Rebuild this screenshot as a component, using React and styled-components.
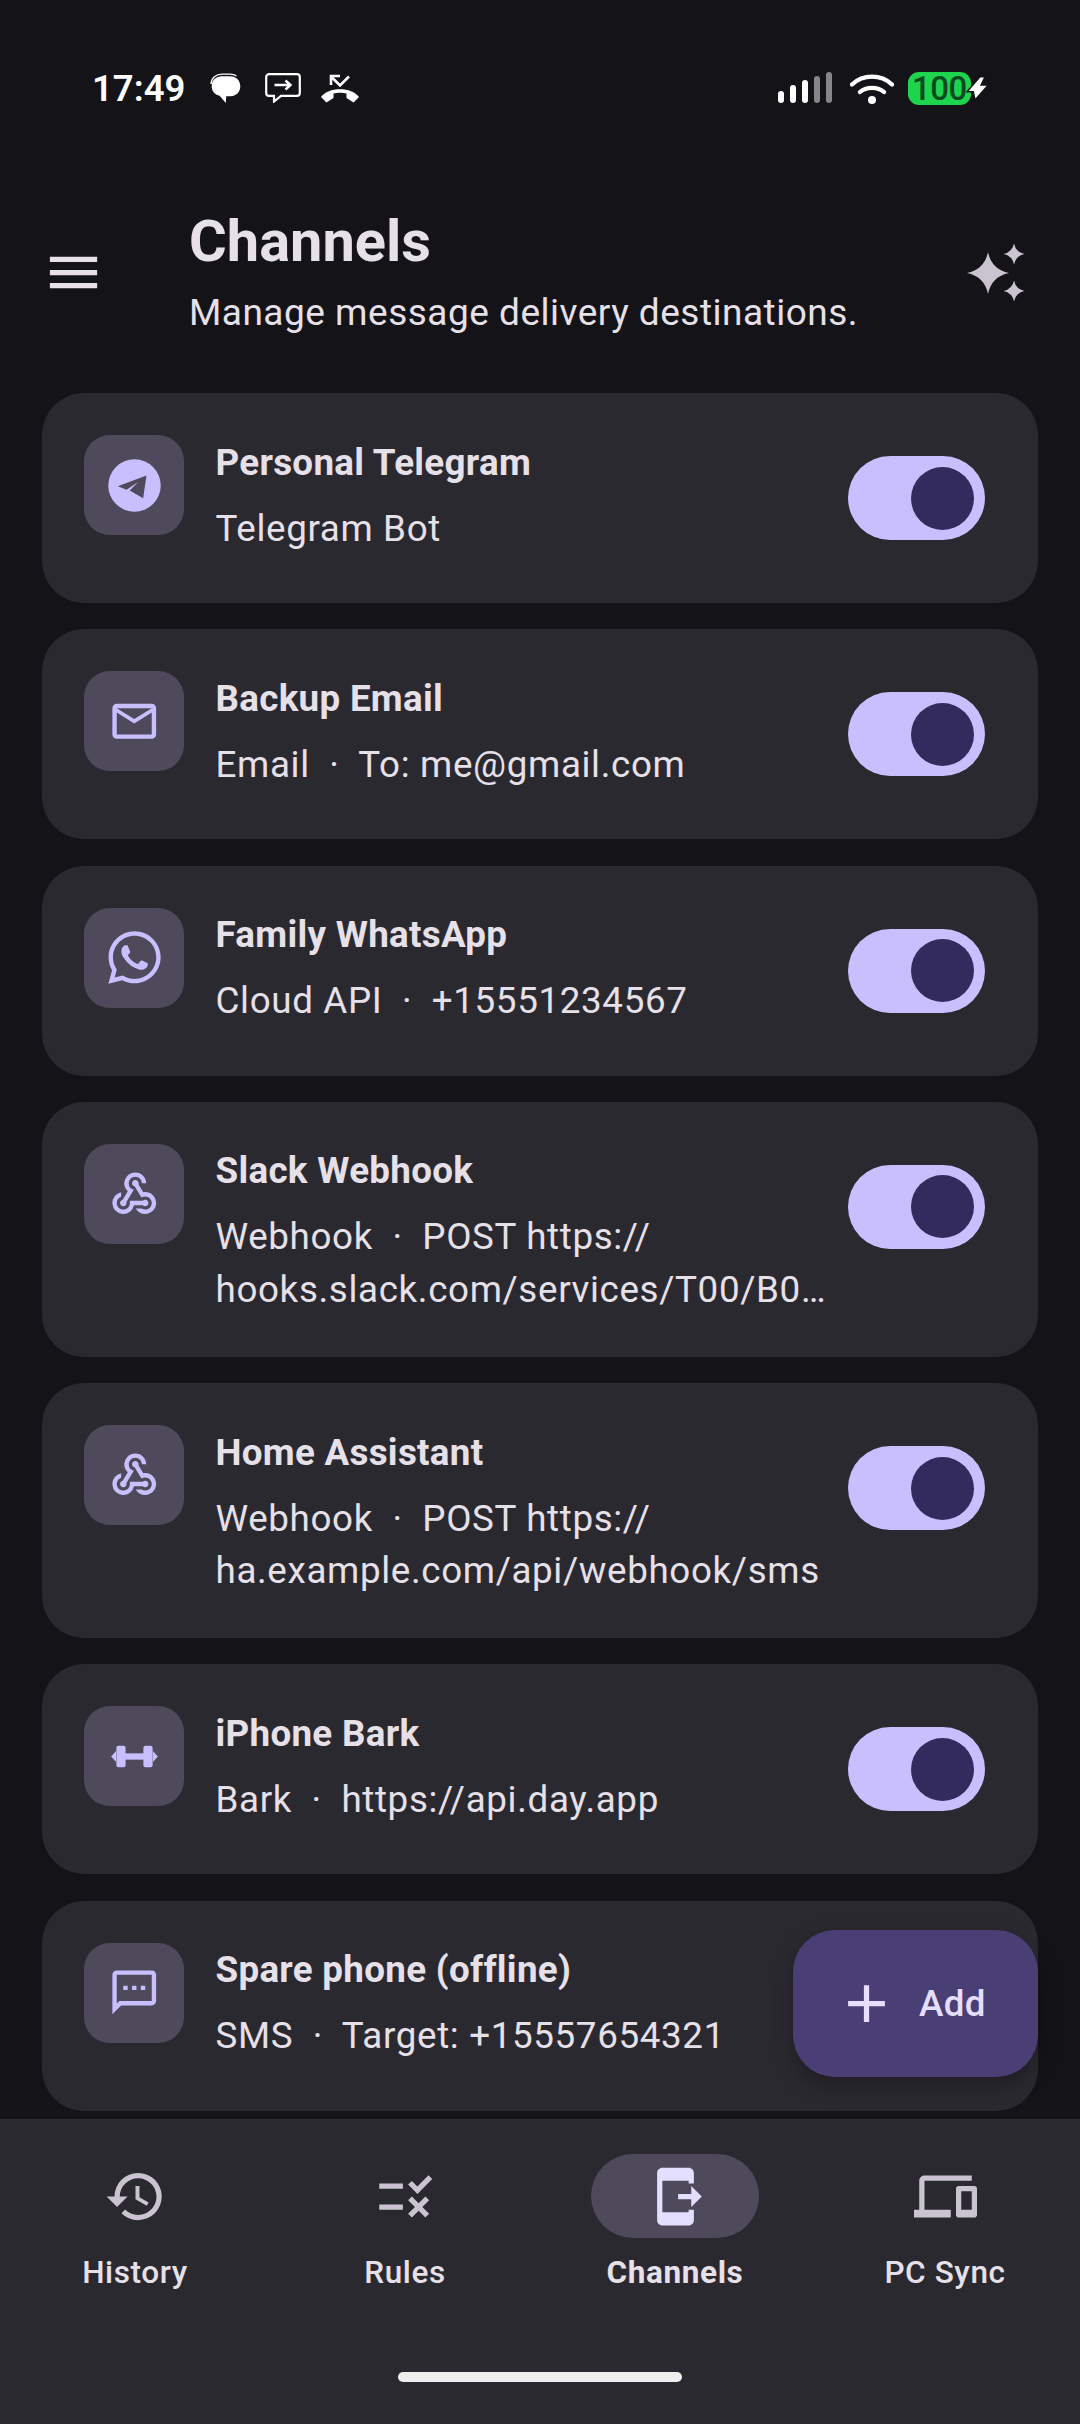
import React from "react";
import styled, { createGlobalStyle } from "styled-components";
import {
  MdMenu,
  MdMailOutline,
  MdWebhook,
  MdOutlineSms,
  MdAdd,
  MdHistory,
  MdRule,
  MdSendToMobile,
  MdDevices,
} from "react-icons/md";

const GlobalStyle = createGlobalStyle`
  html, body {
    margin: 0;
    padding: 0;
    background: #141318;
  }
  body {
    font-family: Roboto, "Liberation Sans", sans-serif;
    color: #e6e0e9;
  }
`;

const Page = styled.div`
  width: 1080px;
  height: 2424px;
  display: flex;
  flex-direction: column;
  overflow: hidden;
  background: #141318;
`;

const StatusBar = styled.div`
  flex: none;
  height: 176px;
  padding: 0 90px 0 92px;
  display: flex;
  align-items: center;
  justify-content: space-between;
  box-sizing: border-box;
`;

const StatusGroup = styled.div`
  display: flex;
  align-items: center;
`;

const Clock = styled.span`
  font-size: 36.5px;
  font-weight: 600;
  color: #fff;
  margin-right: 24px;
`;

const BatteryPill = styled.div`
  width: 63px;
  height: 33px;
  margin-left: 14px;
  border-radius: 11px;
  background: #1ed44f;
  color: #0b4a1f;
  font-size: 33px;
  font-weight: 500;
  line-height: 33px;
  text-align: center;
  letter-spacing: -0.5px;
`;

const Header = styled.header`
  flex: none;
  height: 193px;
  padding: 0 53px 0 42px;
  display: flex;
  align-items: center;
  color: #e6e0e9;
`;

const HeaderText = styled.div`
  flex: 1;
  margin-left: 84px;
  margin-top: -1px;
`;

const Title = styled.h1`
  margin: 0 0 9px;
  font-size: 57.75px;
  line-height: 73.5px;
  font-weight: 700;
`;

const Subtitle = styled.p`
  margin: 0;
  font-size: 37px;
  line-height: 52px;
  letter-spacing: 0.5px;
`;

const Main = styled.main`
  position: relative;
  flex: 1;
  min-height: 0;
  overflow: hidden;
`;

const List = styled.div`
  padding: 24px 42px 0;
  display: flex;
  flex-direction: column;
  gap: 26.25px;
`;

const Card = styled.article`
  min-height: 210px;
  box-sizing: border-box;
  padding: 42px 53px 40.5px 42px;
  border-radius: 42px;
  background: #2b2930;
  display: flex;
  align-items: flex-start;
`;

const Tile = styled.div`
  flex: none;
  width: 100px;
  height: 100px;
  border-radius: 26px;
  background: #4e4a5c;
  color: #c9bfff;
  display: flex;
  align-items: center;
  justify-content: center;
`;

const CardBody = styled.div`
  flex: 1;
  min-width: 0;
  margin: 1.5px 0 0 31.5px;
`;

const CardTitle = styled.div`
  font-size: 36.75px;
  line-height: 52px;
  font-weight: 700;
  letter-spacing: 0.3px;
  color: #e6e0e9;
  margin-bottom: 14px;
`;

const CardLine = styled.div`
  font-size: 36.75px;
  line-height: 52.5px;
  letter-spacing: 0.65px;
  color: #e6e0e9;
  white-space: pre;
`;

const Toggle = styled.div`
  flex: none;
  width: 137px;
  height: 84px;
  margin-top: 21px;
  padding-right: 11px;
  box-sizing: border-box;
  border-radius: 42px;
  background: #c9bfff;
  display: flex;
  align-items: center;
  justify-content: flex-end;
`;

const ToggleThumb = styled.div`
  width: 63px;
  height: 63px;
  border-radius: 50%;
  background: #332a5e;
`;

const Fab = styled.button`
  position: absolute;
  right: 42px;
  bottom: 42px;
  width: 245px;
  height: 147px;
  padding: 0 0 0 42px;
  box-sizing: border-box;
  border: 0;
  border-radius: 42px;
  background: #4a3f75;
  color: #e6deff;
  font-family: inherit;
  font-size: 36.75px;
  font-weight: 500;
  letter-spacing: 0.3px;
  display: flex;
  align-items: center;
  gap: 21px;
  box-shadow: 0 8px 20px rgba(0, 0, 0, 0.28);
`;

const Nav = styled.nav`
  flex: none;
  height: 305px;
  box-sizing: border-box;
  padding-top: 35px;
  background: #2b2930;
  display: flex;
  flex-direction: column;
  align-items: center;
`;

const NavRow = styled.div`
  width: 100%;
  display: grid;
  grid-template-columns: repeat(4, 1fr);
`;

const NavItem = styled.div`
  display: flex;
  flex-direction: column;
  align-items: center;
  gap: 14px;
`;

const NavPill = styled.div`
  width: 168px;
  height: 84px;
  border-radius: 42px;
  display: flex;
  align-items: center;
  justify-content: center;
  background: ${(p) => (p.$active ? "#4e4a5c" : "transparent")};
  color: ${(p) => (p.$active ? "#e5dfff" : "#cac4d0")};
`;

const NavLabel = styled.span`
  font-size: 31.5px;
  line-height: 42px;
  letter-spacing: 0.6px;
  font-weight: ${(p) => (p.$active ? 700 : 500)};
  color: #e6e0e9;
`;

const HomeBar = styled.div`
  width: 284px;
  height: 10px;
  margin-top: 78px;
  border-radius: 5px;
  background: #efefef;
`;

const SparkleIcon = styled.svg`
  flex: none;
  color: #cac4d0;
`;

const StatusIcon = styled.svg`
  display: block;
  flex: none;
  margin-left: ${(p) => p.$gap || 0}px;
`;

function Star({ cx, cy, r }) {
  const k = r * 0.17;
  return (
    <path
      d={`M${cx} ${cy - r}Q${cx + k} ${cy - k} ${cx + r} ${cy}Q${cx + k} ${cy + k} ${cx} ${cy + r}Q${cx - k} ${cy + k} ${cx - r} ${cy}Q${cx - k} ${cy - k} ${cx} ${cy - r}Z`}
      fill="currentColor"
    />
  );
}

const Sparkles = () => (
  <SparkleIcon width="60" height="60" viewBox="0 0 60 60">
    <Star cx={21} cy={30} r={21} />
    <Star cx={47} cy={11} r={10.5} />
    <Star cx={47} cy={48} r={10.5} />
  </SparkleIcon>
);

const TelegramIcon = () => (
  <svg width="63" height="63" viewBox="0 0 24 24" fill="currentColor">
    <path
      fillRule="evenodd"
      d="M12 2a10 10 0 1 0 0 20 10 10 0 0 0 0-20zM5.65 12.25 16.57 8.19 15.3 16.83 10.22 13.9 13.27 10.73 8.95 13.65z"
    />
  </svg>
);

const WhatsappIcon = () => (
  <svg width="63" height="63" viewBox="0 0 24 24" fill="currentColor">
    <path d="M12.04 2C6.58 2 2.13 6.45 2.13 11.91C2.13 13.66 2.59 15.36 3.45 16.86L2.05 22L7.3 20.62C8.75 21.41 10.38 21.83 12.04 21.83C17.5 21.83 21.95 17.38 21.95 11.92C21.95 9.27 20.92 6.78 19.05 4.91C17.18 3.03 14.69 2 12.04 2M12.05 3.67C14.25 3.67 16.31 4.53 17.87 6.09C19.42 7.65 20.28 9.72 20.28 11.92C20.28 16.46 16.58 20.15 12.04 20.15C10.56 20.15 9.11 19.76 7.85 19L7.55 18.83L4.43 19.65L5.26 16.61L5.06 16.29C4.24 15 3.8 13.47 3.8 11.91C3.81 7.37 7.5 3.67 12.05 3.67M8.53 7.33C8.37 7.33 8.1 7.39 7.87 7.64C7.65 7.89 7 8.5 7 9.71C7 10.93 7.89 12.1 8 12.27C8.14 12.44 9.76 14.94 12.25 16C12.84 16.27 13.3 16.42 13.66 16.53C14.25 16.72 14.79 16.69 15.22 16.63C15.7 16.56 16.68 16.03 16.89 15.45C17.1 14.87 17.1 14.38 17.04 14.27C16.97 14.17 16.81 14.11 16.56 14C16.31 13.86 15.09 13.26 14.87 13.18C14.64 13.1 14.5 13.06 14.31 13.3C14.15 13.55 13.67 14.11 13.53 14.27C13.38 14.44 13.24 14.46 13 14.34C12.74 14.21 11.94 13.95 11 13.11C10.26 12.45 9.77 11.64 9.62 11.39C9.5 11.15 9.61 11 9.73 10.89C9.84 10.78 10 10.6 10.1 10.45C10.23 10.31 10.27 10.2 10.35 10.04C10.43 9.87 10.39 9.73 10.33 9.61C10.27 9.5 9.77 8.26 9.56 7.77C9.36 7.29 9.16 7.35 9 7.34C8.86 7.34 8.7 7.33 8.53 7.33Z" />
  </svg>
);

const BarkIcon = () => (
  <svg width="63" height="63" viewBox="0 0 24 24" fill="currentColor">
    <rect x="5.1" y="7.9" width="3.5" height="8.2" rx="0.8" />
    <rect x="15.4" y="7.9" width="3.5" height="8.2" rx="0.8" />
    <rect x="8" y="10.8" width="8" height="2.4" />
    <path d="M5 9.9 3.1 12 5 14.1zM19 9.9 20.9 12 19 14.1z" />
  </svg>
);

const BubbleStatus = () => (
  <StatusIcon width="33" height="30" viewBox="0 0 33 30">
    <path
      d="M2 11C2.5 5 7 1.2 13 1.2H21C24 1.2 26 1.8 27.5 3"
      fill="none"
      stroke="#fff"
      strokeWidth="1.3"
    />
    <path
      d="M12.5 3.3H21.5C27 3.3 31.3 7.5 31.3 13.3 31.3 19 27 23.3 21.5 23.3H17.2L16.8 30 10.6 22.8C6 22 2.7 18.2 2.7 13.3 2.7 7.5 7 3.3 12.5 3.3Z"
      fill="#fff"
    />
  </StatusIcon>
);

const MessageStatus = () => (
  <StatusIcon $gap={23} width="36" height="30" viewBox="0 0 36 30">
    <path
      d="M4 1.2H32A2.8 2.8 0 0 1 34.8 4V20A2.8 2.8 0 0 1 32 22.8H16L9 28.5V22.8H4A2.8 2.8 0 0 1 1.2 20V4A2.8 2.8 0 0 1 4 1.2Z"
      fill="none"
      stroke="#fff"
      strokeWidth="2.2"
    />
    <path d="M9.5 12H25M20.5 7.5 25.5 12 20.5 16.5" fill="none" stroke="#fff" strokeWidth="2.4" />
  </StatusIcon>
);

const CallStatus = () => (
  <StatusIcon $gap={19} width="40" height="30" viewBox="0 0 40 30">
    <path d="M1 24C8 13.5 32 13.5 39 24L33.5 29.5 26.5 25V20.5C23 19.5 17 19.5 13.5 20.5V25L6.5 29.5Z" fill="#fff" />
    <path d="M29 3.5 20 12.5 12 4.5" fill="none" stroke="#fff" strokeWidth="2.6" />
    <path d="M11 12V3H20" fill="none" stroke="#fff" strokeWidth="2.6" />
  </StatusIcon>
);

const SignalStatus = () => (
  <StatusIcon width="54" height="32" viewBox="0 0 54 32" fill="#fff">
    <rect x="0" y="19" width="6" height="12" rx="3" />
    <rect x="12" y="13" width="6" height="18" rx="3" />
    <rect x="24" y="8" width="6" height="23" rx="3" />
    <rect x="36" y="4" width="6" height="27" rx="3" fill="#868686" />
    <rect x="48" y="0" width="6" height="31" rx="3" fill="#868686" />
  </StatusIcon>
);

const WifiStatus = () => (
  <StatusIcon $gap={18} width="44" height="33" viewBox="0 0 44 33">
    <path d="M2 12.5C13 2 31 2 42 12.5" fill="none" stroke="#fff" strokeWidth="4.4" strokeLinecap="round" />
    <path d="M10 20C16 14.5 28 14.5 34 20" fill="none" stroke="#fff" strokeWidth="4.4" strokeLinecap="round" />
    <circle cx="22" cy="28" r="4" fill="#fff" />
  </StatusIcon>
);

const BoltStatus = () => (
  <StatusIcon $gap={-5} width="24" height="27" viewBox="0 0 24 27">
    <path d="M14 1.7 1 16.7H7.3L9 25 22.3 10H15L19 1.7Z" fill="#fff" stroke="#141318" strokeWidth="1.4" />
  </StatusIcon>
);

const channels = [
  { name: "Personal Telegram", lines: ["Telegram Bot"], icon: <TelegramIcon /> },
  { name: "Backup Email", lines: ["Email  ·  To: me@gmail.com"], icon: <MdMailOutline size={52.5} /> },
  { name: "Family WhatsApp", lines: ["Cloud API  ·  +15551234567"], icon: <WhatsappIcon /> },
  {
    name: "Slack Webhook",
    lines: ["Webhook  ·  POST https://", "hooks.slack.com/services/T00/B0…"],
    icon: <MdWebhook size={52.5} />,
  },
  {
    name: "Home Assistant",
    lines: ["Webhook  ·  POST https://", "ha.example.com/api/webhook/sms"],
    icon: <MdWebhook size={52.5} />,
  },
  { name: "iPhone Bark", lines: ["Bark  ·  https://api.day.app"], icon: <BarkIcon /> },
  { name: "Spare phone (offline)", lines: ["SMS  ·  Target: +15557654321"], icon: <MdOutlineSms size={52.5} /> },
];

const tabs = [
  { label: "History", icon: MdHistory },
  { label: "Rules", icon: MdRule },
  { label: "Channels", icon: MdSendToMobile, active: true },
  { label: "PC Sync", icon: MdDevices },
];

function App() {
  return (
    <Page>
      <GlobalStyle />
      <StatusBar>
        <StatusGroup>
          <Clock>17:49</Clock>
          <BubbleStatus />
          <MessageStatus />
          <CallStatus />
        </StatusGroup>
        <StatusGroup>
          <SignalStatus />
          <WifiStatus />
          <BatteryPill>100</BatteryPill>
          <BoltStatus />
        </StatusGroup>
      </StatusBar>

      <Header>
        <MdMenu size={63} />
        <HeaderText>
          <Title>Channels</Title>
          <Subtitle>Manage message delivery destinations.</Subtitle>
        </HeaderText>
        <Sparkles />
      </Header>

      <Main>
        <List>
          {channels.map((c) => (
            <Card key={c.name}>
              <Tile>{c.icon}</Tile>
              <CardBody>
                <CardTitle>{c.name}</CardTitle>
                {c.lines.map((line) => (
                  <CardLine key={line}>{line}</CardLine>
                ))}
              </CardBody>
              <Toggle>
                <ToggleThumb />
              </Toggle>
            </Card>
          ))}
        </List>
        <Fab>
          <MdAdd size={63} />
          Add
        </Fab>
      </Main>

      <Nav>
        <NavRow>
          {tabs.map(({ label, icon: Icon, active }) => (
            <NavItem key={label}>
              <NavPill $active={active}>
                <Icon size={63} />
              </NavPill>
              <NavLabel $active={active}>{label}</NavLabel>
            </NavItem>
          ))}
        </NavRow>
        <HomeBar />
      </Nav>
    </Page>
  );
}

export default App;
